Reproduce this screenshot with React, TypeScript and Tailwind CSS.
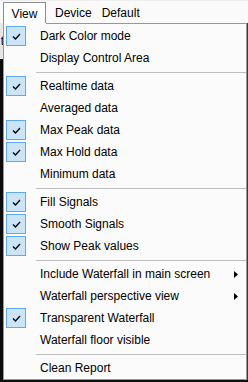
import { ReactNode } from "react";

type Entry =
  | { kind: "item"; label: string; checked?: boolean; sub?: boolean }
  | { kind: "sep" };

const ENTRIES: Entry[] = [
  { kind: "item", label: "Dark Color mode", checked: true },
  { kind: "item", label: "Display Control Area" },
  { kind: "sep" },
  { kind: "item", label: "Realtime data", checked: true },
  { kind: "item", label: "Averaged data" },
  { kind: "item", label: "Max Peak data", checked: true },
  { kind: "item", label: "Max Hold data", checked: true },
  { kind: "item", label: "Minimum data" },
  { kind: "sep" },
  { kind: "item", label: "Fill Signals", checked: true },
  { kind: "item", label: "Smooth Signals", checked: true },
  { kind: "item", label: "Show Peak values", checked: true },
  { kind: "sep" },
  { kind: "item", label: "Include Waterfall in main screen", sub: true },
  { kind: "item", label: "Waterfall perspective view", sub: true },
  { kind: "item", label: "Transparent Waterfall", checked: true },
  { kind: "item", label: "Waterfall floor visible" },
  { kind: "sep" },
  { kind: "item", label: "Clean Report" },
];

function CheckBox() {
  return (
    <div className="w-[20px] h-[20px] border border-[#5fa9ee] bg-[#cce4f7] flex items-center justify-center">
      <svg width="9" height="7" viewBox="0 0 9 7">
        <path d="M1 3.5 L3.5 6 L8 1" fill="none" stroke="#000" strokeWidth="1.3" />
      </svg>
    </div>
  );
}

function MenuItem({ label, checked, sub }: { label: string; checked?: boolean; sub?: boolean }) {
  return (
    <div className="h-[22px] flex items-center pl-[2px]">
      <div className="w-[20px] h-[20px]">{checked ? <CheckBox /> : null}</div>
      <span className="ml-[14px] flex-1 leading-none">{label}</span>
      {sub ? (
        <svg width="4" height="7" viewBox="0 0 4 7" className="mr-[8px]">
          <path d="M0 0 L4 3.5 L0 7 Z" fill="#000" />
        </svg>
      ) : null}
    </div>
  );
}

function Separator() {
  return (
    <div className="h-[6px] pt-[3px]">
      <div className="h-[1px] ml-[32px] mr-[0px] bg-[#bfbfbf]" />
    </div>
  );
}

function BarLabel({ children, active }: { children: ReactNode; active?: boolean }) {
  return active ? (
    <div className="ml-[3px] mt-[1px] h-[22px] w-[43px] border-l border-t border-r border-[#8c8c8c] bg-white flex items-center justify-center">
      {children}
    </div>
  ) : (
    <div className="mt-[1px] h-[22px] flex items-center">{children}</div>
  );
}

export default function App() {
  return (
    <div
      className="w-[248px] h-[382px] bg-[#101010] overflow-hidden text-[12px] text-black"
      style={{ fontFamily: '"Liberation Sans", Arial, sans-serif' }}
    >
      <div className="h-[23px] bg-[#fafafa] border-t border-[#efefef] flex items-start -mt-[0px]">
        <BarLabel active>View</BarLabel>
        <div className="ml-[9px]">
          <BarLabel>Device</BarLabel>
        </div>
        <div className="ml-[10px]">
          <BarLabel>Default</BarLabel>
        </div>
      </div>
      <div className="flex">
        <div className="w-[3px] flex flex-col">
          <div className="h-[36px] bg-[#e6e6e6] flex items-center justify-end overflow-hidden">
            <span className="text-[12px] leading-none mr-[-1px]">t</span>
          </div>
          <div className="flex-1 bg-[#0c0c0c]" />
        </div>
        <div className="w-[244px] bg-[#fbfbfb] border-l border-r border-b border-[#979797]">
          <div className="flex h-[1px]">
            <div className="w-[42px] bg-white" />
            <div className="flex-1 bg-[#979797]" />
          </div>
          <div className="pt-[1px]">
            {ENTRIES.map((e, i) =>
              e.kind === "sep" ? (
                <Separator key={i} />
              ) : (
                <MenuItem key={i} label={e.label} checked={e.checked} sub={e.sub} />
              )
            )}
          </div>
        </div>
        <div className="w-[1px] bg-[#3a3a3a]" />
      </div>
    </div>
  );
}
